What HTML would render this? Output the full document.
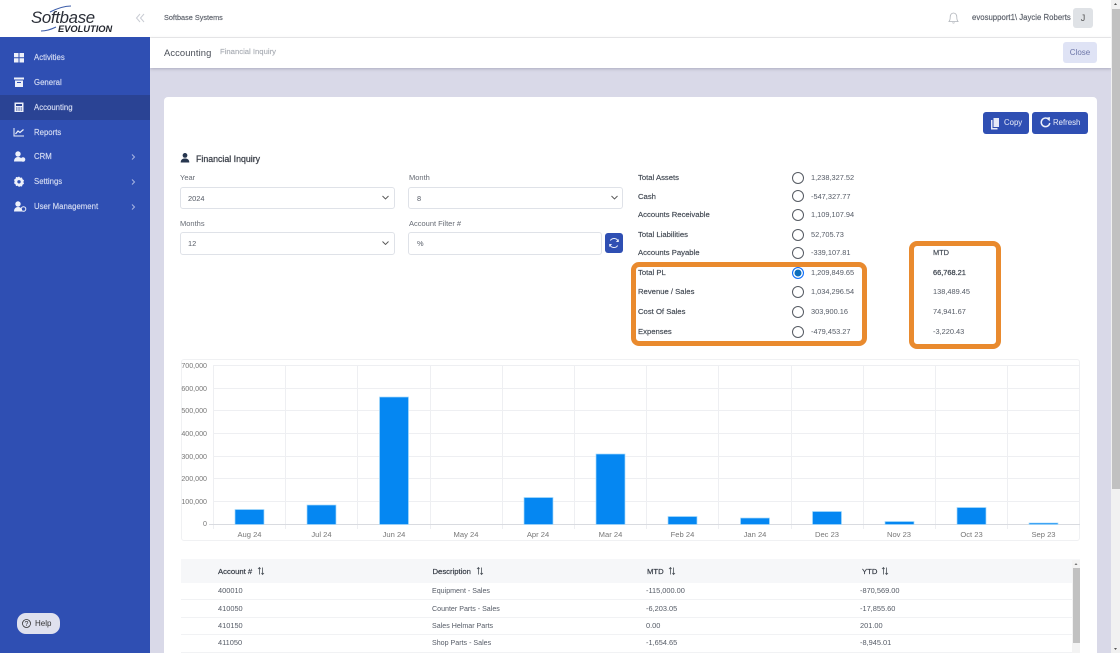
<!DOCTYPE html>
<html><head><meta charset="utf-8">
<style>
*{box-sizing:border-box}
html,body{margin:0;padding:0;width:1120px;height:653px;overflow:hidden;background:#d9d9e8;font-family:"Liberation Sans","DejaVu Sans",sans-serif;}
#w{position:absolute;left:0;top:0;width:1120px;height:653px;overflow:hidden;background:#d9d9e8;filter:blur(.25px)}
.a{position:absolute;white-space:nowrap}
.t{position:absolute;white-space:nowrap;font-size:7.4px;line-height:12px;color:#555b66}
.f{position:absolute;white-space:nowrap;font-size:7.5px;line-height:12px;color:#666b74}
.l{position:absolute;white-space:nowrap;left:638px;font-size:7.7px;line-height:12px;color:#3f4650;-webkit-text-stroke:.15px #3f4650}
.c{position:absolute;white-space:nowrap;left:432px;font-size:7.1px;line-height:12px;color:#555b66}
.nav{position:absolute;left:34px;color:#d5dcf3;font-size:7.8px;line-height:12px;white-space:nowrap;-webkit-text-stroke:.15px #d5dcf3}
.box{position:absolute;background:#fff;border:1px solid #dfe2e8;border-radius:3px}
.r{position:absolute;left:792px;width:12px;height:12px;border:1px solid #565b63;border-radius:50%;background:#fff}
svg{position:absolute;overflow:visible}
.gl{stroke:#eeeff2;stroke-width:1}
.lab{font-family:"Liberation Sans",sans-serif;font-size:7.1px;fill:#777}
.bar{fill:#0587f2;stroke:#a9dcfb;stroke-width:.7}
.hd{position:absolute;top:566px;font-size:7.7px;line-height:12px;color:#343a44;-webkit-text-stroke:.2px #343a44;white-space:nowrap}
</style></head><body><div id="w">

<div class="a" style="left:150px;top:0;width:962px;height:38px;background:#fff;border-bottom:1px solid #eee"></div>
<div class="a" style="left:150px;top:38px;width:962px;height:30px;background:#fff;box-shadow:0 1px 3px rgba(120,120,140,.45)"></div>

<div class="a" style="left:0;top:0;width:150px;height:37px;background:#fff"></div>
<div class="a" style="left:0;top:37px;width:150px;height:616px;background:#2f4fb3"></div>
<div class="a" style="left:0;top:95px;width:150px;height:25px;background:#2a4394"></div>

<!-- logo -->
<div class="a" style="left:31px;top:8px;font:italic 16.8px/20px 'Liberation Sans',sans-serif;color:#2b2f38;letter-spacing:-.3px">Softbase</div>
<div class="a" style="left:58px;top:24px;font:italic bold 9.3px/11px 'Liberation Sans',sans-serif;color:#23262e">EVOLUTION</div>
<svg style="left:0;top:0" width="150" height="37" viewBox="0 0 150 37"><path d="M50 12Q62 6 71 6" fill="none" stroke="#3a5ba8" stroke-width="1.1"/><path d="M41 31Q48 31 56 27" fill="none" stroke="#3a5ba8" stroke-width="1.1"/><path d="M140 14L136.500 18L140 22M144 14L140.500 18L144 22" fill="none" stroke="#c9ccd3" stroke-width="1"/></svg>

<!-- nav icons -->
<svg style="left:0;top:40px" width="40" height="180" viewBox="0 40 40 180" fill="#eef1fa">
<path d="M14 53h4.500v4.300H14zM19.500 53H24v4.300h-4.500zM14 58.300h4.500v4.200H14zM19.500 58.300H24v4.200h-4.500z"/>
<path d="M14 77.500h10v2H14zM15 80.500h8v6.500h-8z"/><path d="M17 82h4v1h-4z" fill="#2f4fb3"/>
<path d="M14.500 102.500h9v9.500h-9z"/><path d="M16 104h6v2h-6zM16 107.500h1.500v1H16zM18.300 107.500h1.500v1h-1.500zM20.600 107.500h1.500v1h-1.500zM16 109.500h1.500v1H16zM18.300 109.500h1.500v1h-1.500zM20.600 109.500h1.500v1h-1.500z" fill="#2a4394"/>
<path d="M14 128v8h10" fill="none" stroke="#eef1fa" stroke-width="1"/><path d="M15.500 134l2.500-3 2 1.500 3.500-3" fill="none" stroke="#eef1fa" stroke-width="1.200"/>
<circle cx="18" cy="154" r="2.700"/><path d="M14 161.500c0-3 1.800-4.500 4-4.500s3.500 1 4 2.500v2z"/><circle cx="23" cy="159.500" r="2.300"/>
<path d="M19 176.500l1.200 1.300 1.800-.3.500 1.800 1.500 1-.6 1.700.6 1.700-1.500 1-.5 1.800-1.800-.3L19 187l-1.200-1.300-1.800.3-.5-1.800-1.500-1 .6-1.700-.6-1.700 1.500-1 .5-1.800 1.800.3z"/><circle cx="19" cy="181.800" r="1.700" fill="#2f4fb3"/>
<circle cx="18" cy="204" r="2.700"/><path d="M14 211.500c0-3 1.800-4.500 4-4.500s3.500 1 4 2.500v2z"/><circle cx="23.500" cy="209" r="2.300" fill="none" stroke="#eef1fa" stroke-width="1"/>
</svg>
<div class="nav" style="top:52px">Activities</div>
<div class="nav" style="top:77px">General</div>
<div class="nav" style="top:102px">Accounting</div>
<div class="nav" style="top:127px">Reports</div>
<div class="nav" style="top:151px">CRM</div>
<div class="nav" style="top:176px">Settings</div>
<div class="nav" style="top:201px">User Management</div>
<svg style="left:130px;top:150px" width="8" height="62" viewBox="0 0 8 62"><path d="M2 4.500l2.500 2.500L2 9.500M2 29.500l2.500 2.500L2 34.500M2 54.500l2.500 2.500L2 59.500" fill="none" stroke="#a9b6e2" stroke-width="1"/></svg>

<!-- help -->
<div class="a" style="left:17px;top:613px;width:43px;height:21px;background:#dfe1ee;border-radius:9px"></div>
<svg style="left:22px;top:619px" width="10" height="10" viewBox="0 0 10 10"><circle cx="4.500" cy="4.500" r="4" fill="none" stroke="#333" stroke-width=".8"/><text x="4.500" y="7" font-size="7" text-anchor="middle" fill="#333" font-family="Liberation Sans">?</text></svg>
<div class="t" style="left:35px;top:618px;color:#333;font-size:8px">Help</div>

<!-- header -->
<div class="t" style="left:164px;top:12px;color:#5a5f69;font-size:7.3px;-webkit-text-stroke:.15px #5a5f69">Softbase Systems</div>
<svg style="left:948px;top:11px" width="11" height="13" viewBox="0 0 11 13"><path d="M1 10.500c1-1 1.200-2 1.200-4.500 0-2.200 1.400-4 3.300-4s3.300 1.800 3.300 4c0 2.500.2 3.500 1.200 4.500zM4.500 11.500c.3.800 1.700.8 2 0" fill="none" stroke="#b0b4ba" stroke-width=".8"/></svg>
<div class="t" style="left:972px;top:12px;color:#5a5f69;font-size:7.8px;-webkit-text-stroke:.15px #5a5f69">evosupport1\ Jaycie Roberts</div>
<div class="a" style="left:1073px;top:8px;width:20px;height:20px;border-radius:3px;background:#dfe2e6;color:#555;font-size:9px;line-height:21px;text-align:center">J</div>

<div class="a" style="left:164px;top:46px;font-size:9.4px;line-height:13px;color:#4a4f58;letter-spacing:.1px">Accounting</div>
<div class="t" style="left:220px;top:46px;color:#a9adb4;font-size:7.7px;-webkit-text-stroke:.15px #a9adb4">Financial Inquiry</div>
<div class="a" style="left:1063px;top:42px;width:34px;height:21px;border-radius:3px;background:#dfe3f5;color:#6c75a8;font-size:8px;line-height:21px;text-align:center">Close</div>

<!-- card -->
<div class="a" style="left:164px;top:97px;width:933px;height:560px;background:#fff;border-radius:4px"></div>

<!-- buttons -->
<div class="a" style="left:983px;top:112px;width:46px;height:22px;border-radius:3px;background:#2f4fb3"></div>
<div class="a" style="left:1032px;top:112px;width:56px;height:22px;border-radius:3px;background:#2f4fb3"></div>
<svg style="left:983px;top:112px" width="105" height="22" viewBox="0 0 105 22"><path d="M10.500 6h5.500v9h-5.500zM8 8h1.500v8h5v1.500H8z" fill="#e6eaf7"/><path d="M65.500 7.200a4.300 4.300 0 1 0 1.300 3.800" fill="none" stroke="#eef1fa" stroke-width="1.500"/><path d="M62.800 5.700l4.200-.6-.3 4.300z" fill="#eef1fa"/></svg>
<div class="t" style="left:1004px;top:116.500px;color:#d9dff3;font-size:7.8px;-webkit-text-stroke:.1px #d9dff3">Copy</div>
<div class="t" style="left:1053px;top:116.500px;color:#d9dff3;font-size:7.8px;-webkit-text-stroke:.1px #d9dff3">Refresh</div>

<!-- title -->
<svg style="left:180px;top:153px" width="10" height="10" viewBox="0 0 10 10" fill="#27364f"><circle cx="5" cy="2.400" r="2.400"/><path d="M.7 9.500c0-2.800 1.600-4 4.300-4s4.300 1.200 4.300 4z"/></svg>
<div class="a" style="left:196px;top:153px;font-size:8.800px;line-height:13px;color:#3a3f48;-webkit-text-stroke:.25px #3a3f48">Financial Inquiry</div>

<!-- form -->
<div class="f" style="left:180px;top:172px">Year</div>
<div class="box" style="left:180px;top:187px;width:215px;height:22px"></div>
<div class="t" style="left:188px;top:193px">2024</div>
<div class="f" style="left:409px;top:172px">Month</div>
<div class="box" style="left:408px;top:187px;width:215px;height:22px"></div>
<div class="t" style="left:417px;top:193px">8</div>
<div class="f" style="left:180px;top:218px">Months</div>
<div class="box" style="left:180px;top:232px;width:215px;height:23px"></div>
<div class="t" style="left:188px;top:238px">12</div>
<div class="f" style="left:409px;top:218px">Account Filter #</div>
<div class="box" style="left:408px;top:232px;width:194px;height:23px"></div>
<div class="t" style="left:417px;top:238px">%</div>
<svg style="left:0;top:0" width="640" height="260" viewBox="0 0 640 260"><path d="M382.500 196l3 3 3-3M611.500 196l3 3 3-3M382.500 241.500l3 3 3-3" fill="none" stroke="#555" stroke-width=".9"/></svg>
<div class="a" style="left:605px;top:233px;width:18px;height:20px;border-radius:3px;background:#2f4fb3"></div>
<svg style="left:605px;top:233px" width="18" height="20" viewBox="0 0 18 20"><path d="M13.300 8.500A4.500 4.500 0 0 0 5.300 7.500M4.700 11.500a4.500 4.500 0 0 0 8 1" fill="none" stroke="#e8edf9" stroke-width="1"/><path d="M13.800 6v3h-3zM4.200 14v-3h3z" fill="#e8edf9"/></svg>

<!-- summary -->
<div class="l" style="top:172px">Total Assets</div>
<div class="l" style="top:191px">Cash</div>
<div class="l" style="top:209px">Accounts Receivable</div>
<div class="l" style="top:229px">Total Liabilities</div>
<div class="l" style="top:247px">Accounts Payable</div>
<div class="l" style="top:267px">Total PL</div>
<div class="l" style="top:286px">Revenue / Sales</div>
<div class="l" style="top:306px">Cost Of Sales</div>
<div class="l" style="top:326px">Expenses</div>

<div class="r" style="top:172px"></div>
<div class="r" style="top:190px"></div>
<div class="r" style="top:209px"></div>
<div class="r" style="top:229px"></div>
<div class="r" style="top:247px"></div>
<div class="r" style="top:267px;border-color:#0d6efd;box-shadow:inset 0 0 0 1.500px #fff;background:#0d6ebd"></div>
<div class="r" style="top:286px"></div>
<div class="r" style="top:306px"></div>
<div class="r" style="top:326px"></div>

<div class="t" style="left:811px;top:172px">1,238,327.52</div>
<div class="t" style="left:811px;top:191px">-547,327.77</div>
<div class="t" style="left:811px;top:209px">1,109,107.94</div>
<div class="t" style="left:811px;top:229px">52,705.73</div>
<div class="t" style="left:811px;top:247px">-339,107.81</div>
<div class="t" style="left:811px;top:267px">1,209,849.65</div>
<div class="t" style="left:811px;top:286px">1,034,296.54</div>
<div class="t" style="left:811px;top:306px">303,900.16</div>
<div class="t" style="left:811px;top:326px">-479,453.27</div>

<div class="t" style="left:933px;top:247px;color:#3f4650;-webkit-text-stroke:.15px #3f4650">MTD</div>
<div class="t" style="left:933px;top:267px;color:#3f4650;-webkit-text-stroke:.25px #3f4650">66,768.21</div>
<div class="t" style="left:933px;top:286px">138,489.45</div>
<div class="t" style="left:933px;top:306px">74,941.67</div>
<div class="t" style="left:933px;top:326px">-3,220.43</div>

<div class="a" style="left:631px;top:262px;width:236px;height:84px;border:5px solid #e98a2e;border-radius:8px"></div>
<div class="a" style="left:909px;top:241px;width:92px;height:108px;border:5px solid #e98a2e;border-radius:8px"></div>

<!-- chart -->
<div class="a" style="left:181px;top:359px;width:899px;height:182px;border:1px solid #f0f1f3;border-radius:3px"></div>
<svg style="left:0;top:0" width="1120" height="653" viewBox="0 0 1120 653">
<g class="gl">
<path d="M213.500 365.500H1080M213.500 388.500H1080M213.500 410.500H1080M213.500 433.500H1080M213.500 456.500H1080M213.500 478.500H1080M213.500 501.500H1080"/>
<path d="M213.500 365V529M285.500 365V529M357.500 365V529M430.500 365V529M502.500 365V529M574.500 365V529M646.500 365V529M718.500 365V529M791.500 365V529M863.500 365V529M935.500 365V529M1007.500 365V529M1079.500 365V529"/>
</g>
<path d="M209 524.500H1080" stroke="#d9dbe0" stroke-width="1"/>
<rect class="bar" x="235" y="509.500" width="29" height="15"/>
<rect class="bar" x="307" y="505" width="29" height="19.500"/>
<rect class="bar" x="379.500" y="397" width="29" height="127.500"/>
<rect class="bar" x="524" y="497.500" width="29" height="27"/>
<rect class="bar" x="596" y="454" width="29" height="70.500"/>
<rect class="bar" x="668" y="516.500" width="29" height="8"/>
<rect class="bar" x="740.500" y="518" width="29" height="6.500"/>
<rect class="bar" x="812.500" y="511.500" width="29" height="13"/>
<rect class="bar" x="885" y="521.500" width="29" height="3"/>
<rect class="bar" x="957" y="507.500" width="29" height="17"/>
<rect class="bar" x="1029" y="523" width="29" height="1.500"/>
<g class="lab" text-anchor="end">
<text x="207" y="368">700,000</text><text x="207" y="391">600,000</text><text x="207" y="413">500,000</text><text x="207" y="436">400,000</text><text x="207" y="459">300,000</text><text x="207" y="481">200,000</text><text x="207" y="504">100,000</text><text x="207" y="526">0</text>
</g>
<g class="lab" text-anchor="middle" style="font-size:7.6px">
<text x="249.500" y="537">Aug 24</text><text x="321.500" y="537">Jul 24</text><text x="394" y="537">Jun 24</text><text x="466" y="537">May 24</text><text x="538" y="537">Apr 24</text><text x="610.500" y="537">Mar 24</text><text x="682.500" y="537">Feb 24</text><text x="755" y="537">Jan 24</text><text x="827" y="537">Dec 23</text><text x="899" y="537">Nov 23</text><text x="971.500" y="537">Oct 23</text><text x="1043.500" y="537">Sep 23</text>
</g>
</svg>

<!-- table -->
<div class="a" style="left:181px;top:559px;width:899px;height:24px;background:#f6f7f9"></div>
<div class="a" style="left:181px;top:599px;width:891px;height:1px;background:#f1f2f4"></div>
<div class="a" style="left:181px;top:617px;width:891px;height:1px;background:#f1f2f4"></div>
<div class="a" style="left:181px;top:634px;width:891px;height:1px;background:#f1f2f4"></div>
<div class="a" style="left:181px;top:652px;width:891px;height:1px;background:#f1f2f4"></div>
<div class="hd" style="left:218px">Account #</div>
<div class="hd" style="left:432.500px">Description</div>
<div class="hd" style="left:647px">MTD</div>
<div class="hd" style="left:862px">YTD</div>
<svg style="left:0;top:560px" width="900" height="22" viewBox="0 560 900 22"><path d="M259.500 574.500v-7M258 569l1.500-1.500 1 1.500M262.500 567.500v7M261.500 573l1 1.500 1.500-1.500M478.500 574.500v-7M477 569l1.500-1.500 1 1.500M481.500 567.500v7M480.500 573l1 1.500 1.500-1.500M670.500 574.500v-7M669 569l1.500-1.500 1 1.500M673.500 567.500v7M672.500 573l1 1.500 1.500-1.500M883.500 574.500v-7M882 569l1.500-1.500 1 1.500M886.500 567.500v7M885.500 573l1 1.500 1.500-1.500" fill="none" stroke="#4a5058" stroke-width=".8"/></svg>

<div class="t" style="left:218px;top:585px">400010</div>
<div class="c" style="top:585px">Equipment - Sales</div>
<div class="t" style="left:646px;top:585px">-115,000.00</div>
<div class="t" style="left:860px;top:585px">-870,569.00</div>
<div class="t" style="left:218px;top:603px">410050</div>
<div class="c" style="top:603px">Counter Parts - Sales</div>
<div class="t" style="left:646px;top:603px">-6,203.05</div>
<div class="t" style="left:860px;top:603px">-17,855.60</div>
<div class="t" style="left:218px;top:620px">410150</div>
<div class="c" style="top:620px">Sales Helmar Parts</div>
<div class="t" style="left:646px;top:620px">0.00</div>
<div class="t" style="left:860px;top:620px">201.00</div>
<div class="t" style="left:218px;top:637px">411050</div>
<div class="c" style="top:637px">Shop Parts - Sales</div>
<div class="t" style="left:646px;top:637px">-1,654.65</div>
<div class="t" style="left:860px;top:637px">-8,945.01</div>

<!-- inner scrollbar -->
<div class="a" style="left:1072px;top:560px;width:8px;height:93px;background:#f3f3f3"></div>
<div class="a" style="left:1073px;top:568px;width:7px;height:75px;background:#c1c1c1"></div>
<svg style="left:1072px;top:560px" width="8" height="8" viewBox="0 0 8 8"><path d="M2.500 5l1.500-2 1.500 2z" fill="#777"/></svg>

<!-- page scrollbar -->
<div class="a" style="left:1111px;top:0;width:9px;height:653px;background:#f1f1f1"></div>
<div class="a" style="left:1112px;top:9px;width:8px;height:480px;background:#c1c1c1"></div>
<svg style="left:1111px;top:0" width="9" height="653" viewBox="0 0 9 653"><path d="M3 5l1.500-2L6 5zM3 648l1.500 2L6 648z" fill="#555"/></svg>

</div></body></html>
